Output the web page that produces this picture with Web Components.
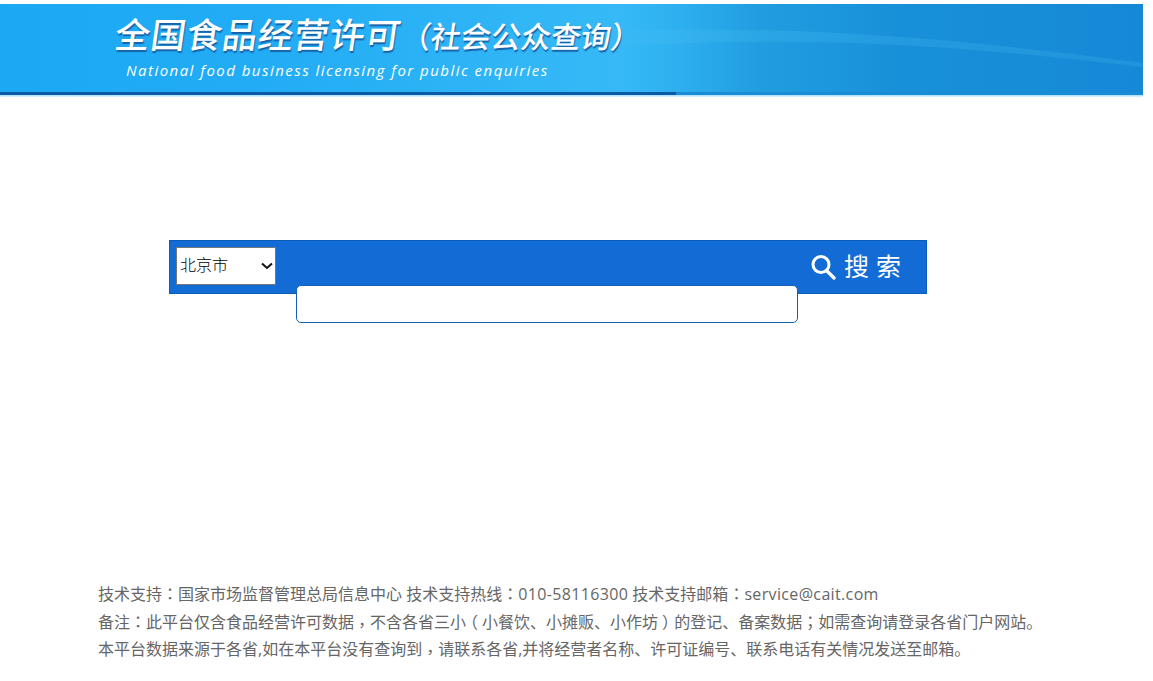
<!DOCTYPE html>
<html lang="zh-CN">
<head>
<meta charset="utf-8">
<title>全国食品经营许可（社会公众查询）</title>
<style>
html,body{margin:0;padding:0;background:#fff;}
body{font-family:"Noto Sans CJK SC","Liberation Sans",sans-serif;height:681px;overflow:hidden;display:flex;flex-direction:column;}
</style>
</head>
<body>
<site-banner>
  <span slot="title">全国食品经营许可</span>
  <span slot="sub">（社会公众查询）</span>
  <span slot="en">National food business licensing for public enquiries</span>
</site-banner>
<search-bar></search-bar>
<site-footer></site-footer>
<script>
class SiteBanner extends HTMLElement{
    constructor(){
        super();
        this.attachShadow({mode:"open"})
    }
    connectedCallback(){
        this.shadowRoot.innerHTML = `
        <style>
            :host{display:block;width:1143px;margin-top:4px;flex:none;}
            .bar{
                position:relative;height:88px;overflow:hidden;box-sizing:border-box;padding:5px 0 0 112px;
                background:linear-gradient(90deg,#1ba9f4 0,#22acf5 260px,#36b9f6 620px,#30b2f1 665px,#209de1 760px,#1890d9 900px,#1689d6 1143px);
            }
            svg{position:absolute;left:0;top:0;}
            .head{position:relative;display:flex;align-items:baseline;color:#fff;transform:skewX(-8deg);transform-origin:0 100%;
                text-shadow:1px 2px 1px #1763a8;white-space:nowrap;line-height:48px;font-weight:500;text-spacing-trim:space-all;}
            .t{font-size:35px;letter-spacing:.75px;}
            .s{font-size:30px;}
            .en{position:relative;font:italic 15px "Open Sans","Liberation Sans",sans-serif;color:#fff;letter-spacing:1.47px;margin:1px 0 0 14px;line-height:20px;white-space:nowrap;}
            .under{display:flex;height:3px;background:#1a8cd6;}
            .under i{display:block;width:676px;background:#0b5aa6;}
            .glow{height:2px;background:linear-gradient(#a4dcf7,#e4f5fd);}
        </style>
        <div class="bar">
            <svg width="1143" height="88" viewBox="0 0 1143 88">
                <defs><linearGradient id="sw" x1="0" x2="1" y1="0" y2="0"><stop offset="0" stop-color="#49c0f2" stop-opacity="0"/><stop offset=".2" stop-color="#49c0f2" stop-opacity=".25"/><stop offset="1" stop-color="#49c0f2" stop-opacity=".2"/></linearGradient></defs>
                <path d="M560 30C740 18 930 30 1143 59V63C930 38 780 30 560 46Z" fill="url(#sw)"/>
            </svg>
            <div class="head"><span class="t"><slot name="title"></slot></span><span class="s"><slot name="sub"></slot></span></div>
            <div class="en"><slot name="en"></slot></div>
        </div>
        <div class="under"><i></i></div>
        <div class="glow"></div>`
    }
}
customElements.define('site-banner', SiteBanner)

class SearchBar extends HTMLElement{
    constructor(){
        super();
        this.attachShadow({mode:"open"})
    }
    connectedCallback(){
        this.shadowRoot.innerHTML = `
        <style>
            :host{display:block;width:758px;margin:143px 0 0 169px;flex:none;}
            .bar{display:flex;box-sizing:border-box;height:54px;background:#136cd6;border:1px solid #0a5cb8;padding:6px 0 0 6px;}
            .pick{position:relative;width:100px;height:38px;flex:none;}
            .pick svg{position:absolute;right:3px;top:15px;pointer-events:none;}
            select{appearance:none;display:block;box-sizing:border-box;width:100%;height:100%;margin:0;background:#fff;color:#000;border:1px solid #767676;border-radius:0;
                font:300 16px "Noto Sans CJK SC",sans-serif;padding:0 0 4px 3px;}
            input{box-sizing:border-box;width:502px;height:38px;margin:38px 0 0 20px;background:#fff;border:1px solid #1660b4;border-radius:5px;padding:0 8px;outline:0;}
            button{display:flex;align-items:center;height:36px;margin:2px 0 0 13px;padding:0;background:none;border:0;color:#fff;
                font:25px "Noto Sans CJK SC",sans-serif;letter-spacing:7px;white-space:nowrap;}
            button svg{margin-right:8px;}
            button span{margin-top:-4px;}
        </style>
        <div class="bar">
            <div class="pick">
                <select><option>北京市</option></select>
                <svg width="12" height="8" viewBox="0 0 12 8"><path d="M1 1.5l5 4.5 5-4.5" fill="none" stroke="#111" stroke-width="2"/></svg>
            </div>
            <input type="text">
            <button>
                <svg width="25" height="26" viewBox="0 0 25 26"><circle cx="10" cy="10.5" r="8" fill="none" stroke="#fff" stroke-width="3"/><path d="M16 17l7 7" stroke="#0b4d99" stroke-width="3.4" stroke-linecap="round" opacity=".5" transform="translate(.6 .8)"/><path d="M16 17l7 7" stroke="#fff" stroke-width="3.4" stroke-linecap="round"/></svg>
                <span>搜索</span>
            </button>
        </div>`
    }
}
customElements.define('search-bar', SearchBar)

class SiteFooter extends HTMLElement{
    constructor(){
        super();
        this.attachShadow({mode:"open"})
    }
    connectedCallback(){
        this.shadowRoot.innerHTML = `
        <style>
            :host{display:block;margin:286px 0 0 98px;font:16px/27px "Open Sans","Noto Sans CJK SC",sans-serif;color:#666;white-space:nowrap;text-spacing-trim:space-all;}
            div{height:27.5px;}
            b{font-weight:400;font-family:"Noto Sans CJK TC",sans-serif;}
            b.low{display:inline-block;transform:translateY(3px);}
            b.par{font-feature-settings:"halt";padding:0 4px;}
            i{font-style:normal;letter-spacing:.35px;}
        </style>
        <div>技术支持<b lang="zh-TW">：</b>国家市场监督管理总局信息中心 技术支持热线<b lang="zh-TW">：</b><i>010-58116300</i> 技术支持邮箱<b lang="zh-TW">：</b><i>service@cait.com</i></div>
        <div>备注<b lang="zh-TW">：</b>此平台仅含食品经营许可数据<b class="low" lang="zh-TW">，</b>不含各省三小<b class="par" lang="zh-TW">（</b>小餐饮、小摊贩、小作坊<b class="par" lang="zh-TW">）</b>的登记、备案数据<b lang="zh-TW">；</b>如需查询请登录各省门户网站。</div>
        <div>本平台数据来源于各省,如在本平台没有查询到<b class="low" lang="zh-TW">，</b>请联系各省,并将经营者名称、许可证编号、联系电话有关情况发送至邮箱。</div>`
    }
}
customElements.define('site-footer', SiteFooter)
</script>
</body>
</html>
